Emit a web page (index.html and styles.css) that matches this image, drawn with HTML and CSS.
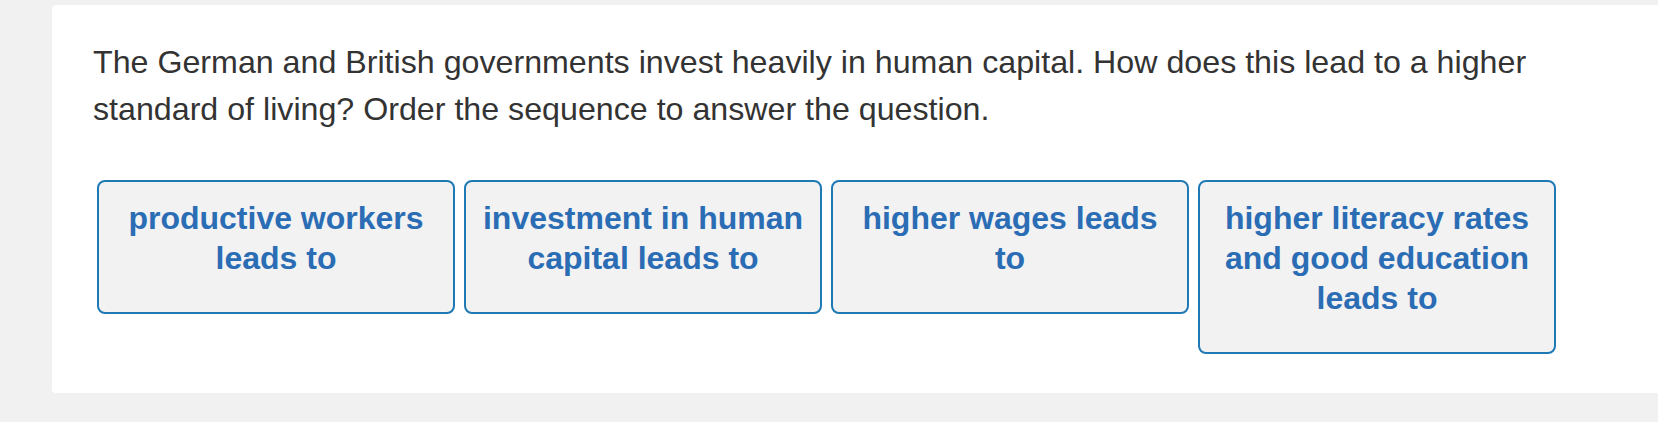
FILE: index.html
```html
<!DOCTYPE html>
<html lang="en">
<head>
    <meta charset="UTF-8">
    <meta name="viewport" content="width=device-width, initial-scale=1.0">
    <title>Order the sequence</title>
    <link rel="stylesheet" href="styles.css">
</head>
<body>
    <div class="panel">
        <p class="question">The German and British governments invest heavily in human capital. How does this lead to a higher standard of living? Order the sequence to answer the question.</p>

        <div class="tiles">
            <div class="tile">productive workers leads to</div>
            <div class="tile">investment in human capital leads to</div>
            <div class="tile">higher wages leads to</div>
            <div class="tile">higher literacy rates and good education leads to</div>
        </div>
    </div>
</body>
</html>
```

FILE: styles.css
```css
body { margin: 0; background: #f1f1f1; font-family: "Liberation Sans", Arial, sans-serif; }
.panel { margin: 5px 0 0 52px; height: 388px; background: #fff; border-radius: 4px 0 0 4px; padding: 34px 0 0 41px; box-sizing: border-box; }
.question { margin: 0; width: 1460px; font-size: 32.2px; line-height: 47px; color: #333; }
.tiles { display: flex; align-items: flex-start; gap: 9px; margin-top: 47px; padding-left: 4px; }
.tile { width: 358px; box-sizing: border-box; padding: 16px 15px 34px; background: #f2f2f2; border: 2px solid #1f79b4; border-radius: 8px; color: #2a6db5; font-weight: bold; font-size: 32px; line-height: 40px; text-align: center; }
```
